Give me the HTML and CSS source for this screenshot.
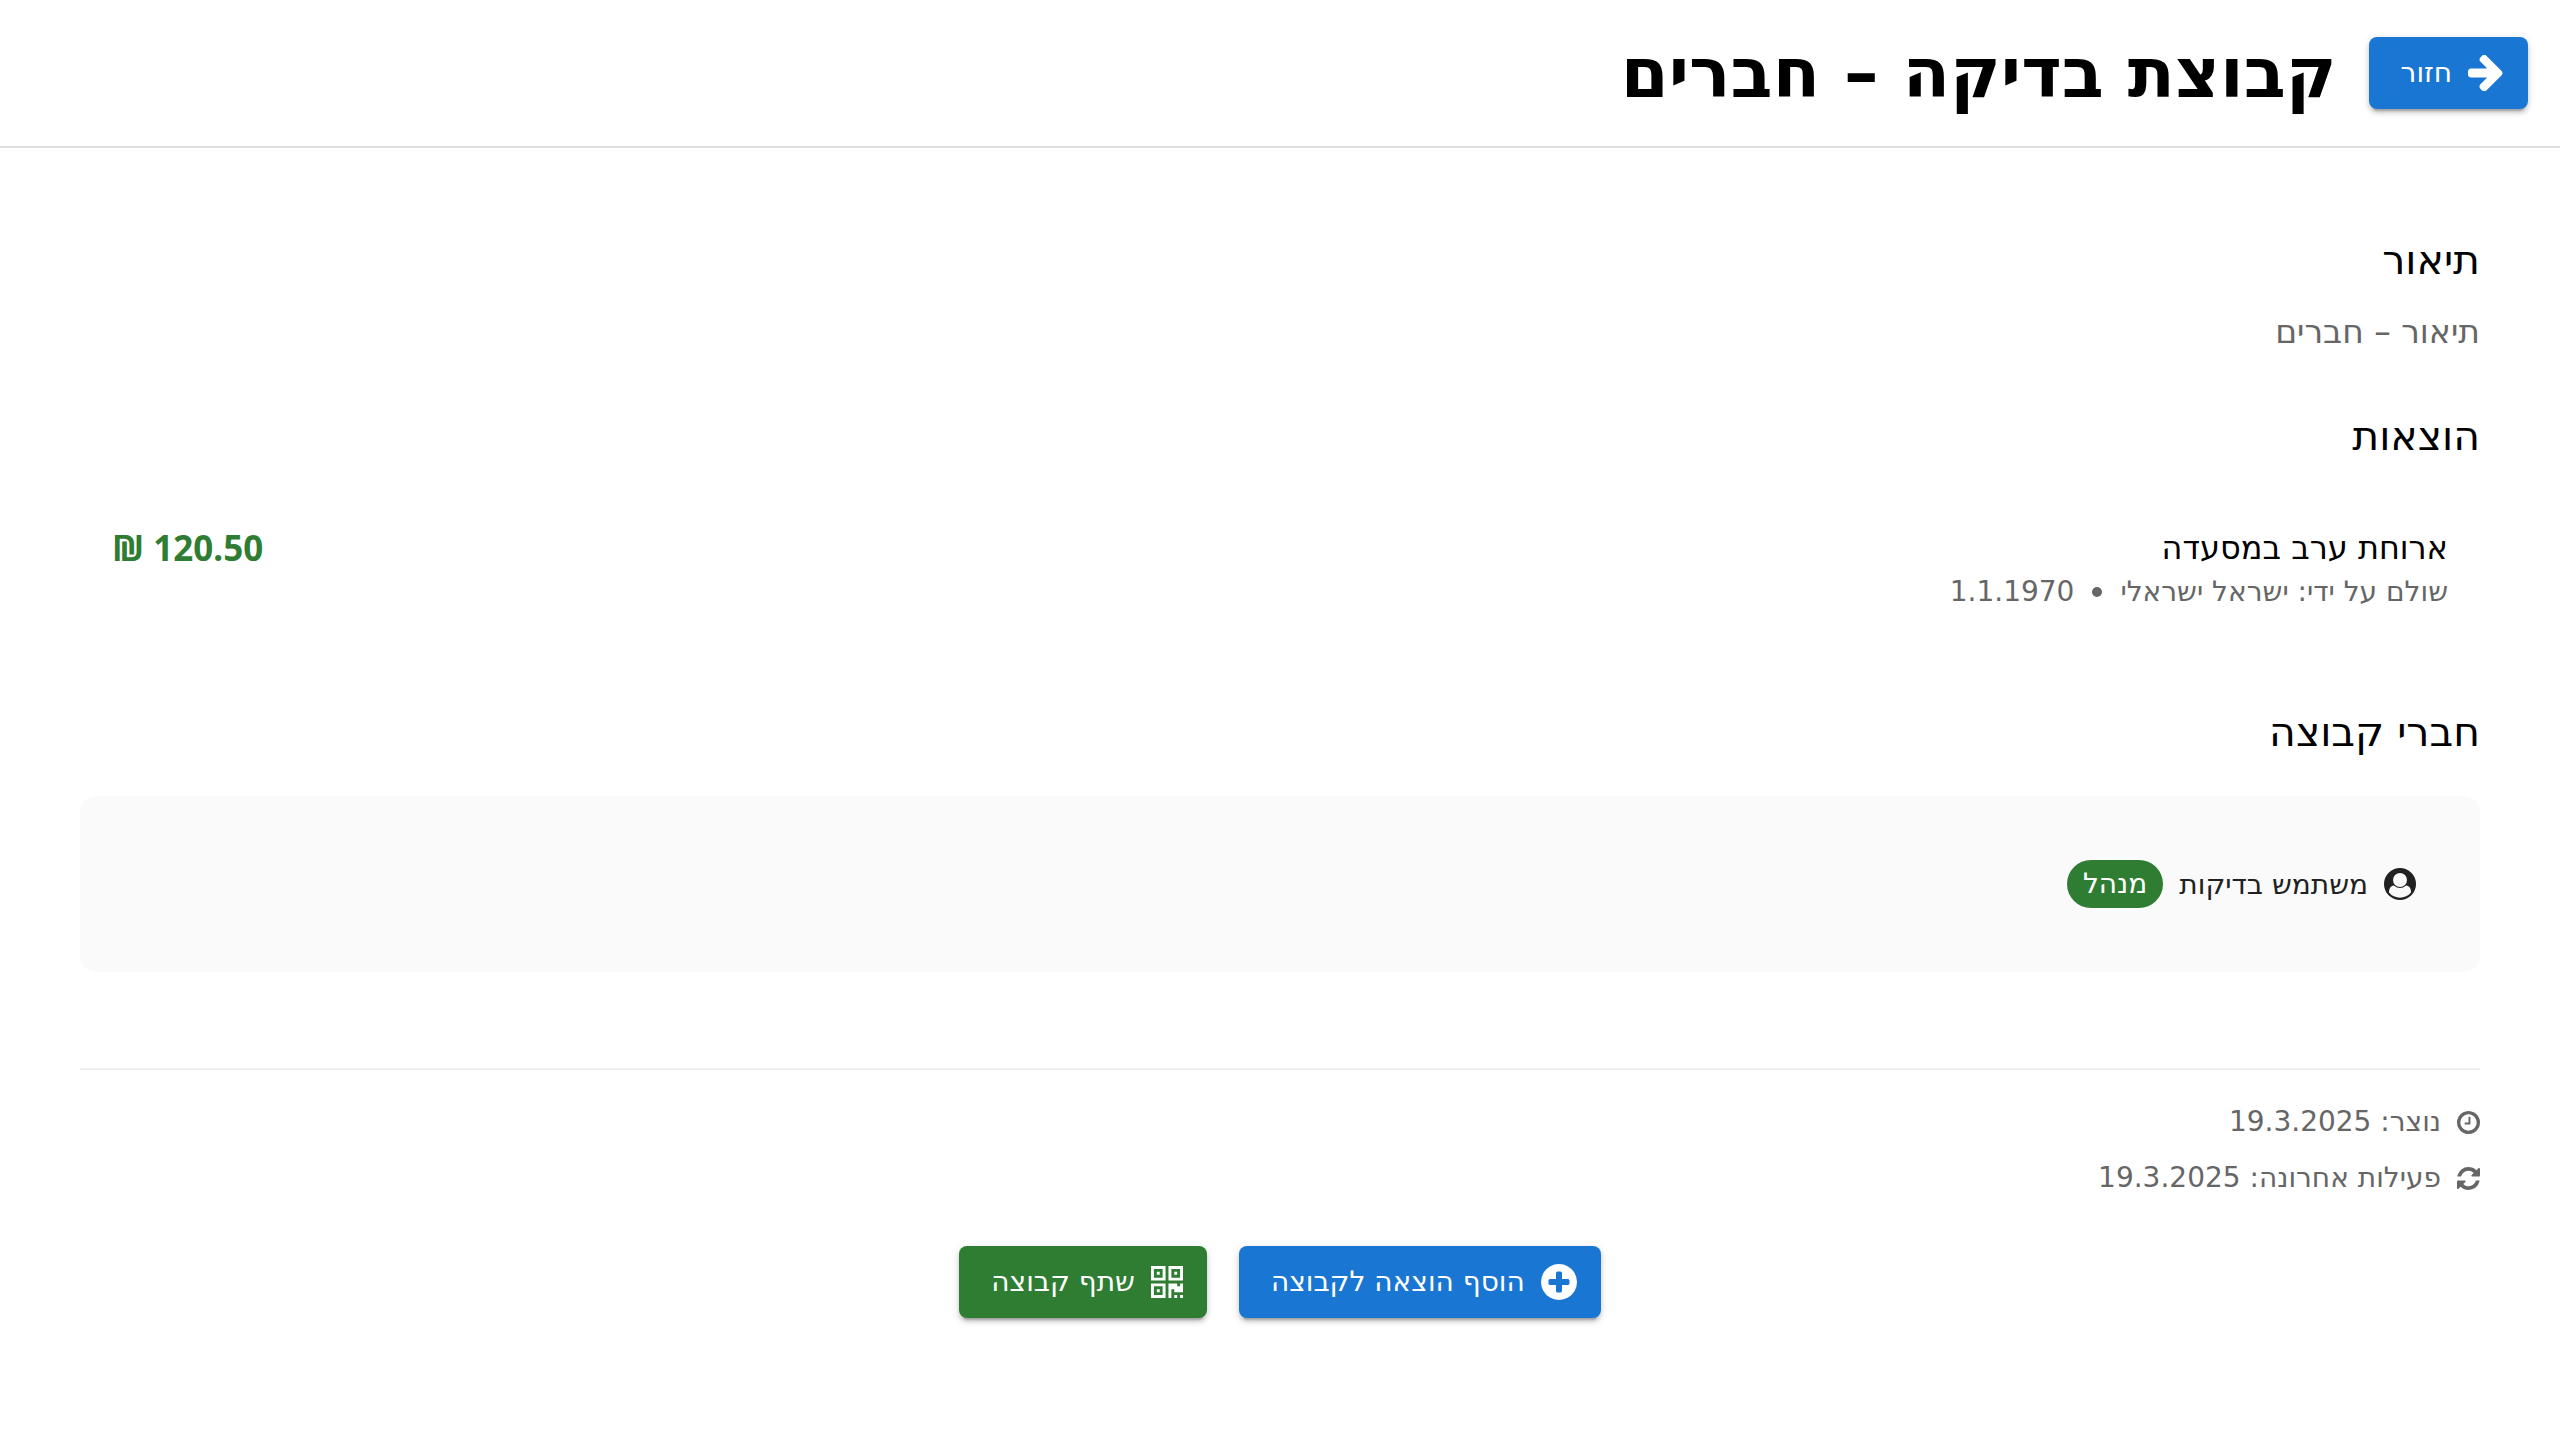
FILE: index.html
```
<!DOCTYPE html>
<html lang="he" dir="rtl">
<head>
<meta charset="utf-8">
<meta name="viewport" content="width=device-width, initial-scale=1">
<title>קבוצת בדיקה – חברים</title>
<link rel="stylesheet" href="styles.css">
</head>
<body>
<header class="topbar">
  <button class="btn btn-blue" type="button">
    <svg class="icon-lg" viewBox="128 192 1536 1536" aria-hidden="true"><path d="M1600 960q0 54-37 91l-651 651q-39 37-91 37-51 0-90-37l-75-75q-38-38-38-91t38-91l293-293h-704q-52 0-84.5-37.5t-32.5-90.5v-128q0-53 32.5-90.5t84.5-37.5h704l-293-294q-38-37-38-90t38-90l75-75q38-38 90-38 53 0 91 38l651 651q37 35 37 90z"/></svg>
    <span>חזור</span>
  </button>
  <h1 class="title">קבוצת בדיקה – חברים</h1>
</header>

<main class="content">
  <section class="section">
    <h2 class="heading">תיאור</h2>
    <p class="description">תיאור – חברים</p>
  </section>

  <section class="section">
    <h2 class="heading">הוצאות</h2>
    <ul class="expenses">
      <li class="expense">
        <div>
          <div class="expense-name">ארוחת ערב במסעדה</div>
          <div class="expense-meta">
            <span>שולם על ידי: ישראל ישראלי</span>
            <span class="dot"></span>
            <time>1.1.1970</time>
          </div>
        </div>
        <div class="amount" dir="ltr">₪ 120.50</div>
      </li>
    </ul>
  </section>

  <section class="section">
    <h2 class="heading">חברי קבוצה</h2>
    <ul class="members">
      <li class="member">
        <svg class="icon-md" viewBox="0 0 32 32" aria-hidden="true">
          <circle cx="16" cy="16" r="16"/>
          <path class="cutout" d="M5 24.400C5 20 7 17.600 10.500 17.600H21.500C25 17.600 27 20 27 24.400A14 14 0 0 1 5 24.400z"/>
          <circle cx="16" cy="12" r="8"/>
          <circle class="cutout" cx="16" cy="12" r="7"/>
        </svg>
        <span>משתמש בדיקות</span>
        <span class="badge">מנהל</span>
      </li>
    </ul>
  </section>

  <footer class="details">
    <div class="detail">
      <svg class="icon-sm" viewBox="128 128 1536 1536" aria-hidden="true"><path d="M1024 544v448q0 14-9 23t-23 9h-320q-14 0-23-9t-9-23v-64q0-14 9-23t23-9h224v-352q0-14 9-23t23-9h64q14 0 23 9t9 23zm416 352q0-148-73-273t-198-198-273-73-273 73-198 198-73 273 73 273 198 198 273 73 273-73 198-198 73-273zm224 0q0 209-103 385.500t-279.500 279.500-385.500 103-385.500-103-279.500-279.500-103-385.500 103-385.500 279.500-279.500 385.500-103 385.500 103 279.500 279.500 103 385.500z"/></svg>
      <span>נוצר: 19.3.2025</span>
    </div>
    <div class="detail">
      <svg class="icon-sm" viewBox="128 128 1536 1536" aria-hidden="true"><path d="M1639 1056q0 5-1 7-64 268-268 434.500t-478 166.500q-146 0-282.500-55t-243.500-157l-129 129q-19 19-45 19t-45-19-19-45v-448q0-26 19-45t45-19h448q26 0 45 19t19 45-19 45l-137 137q71 66 161 102t187 36q134 0 250-65t186-179q11-17 53-117 8-23 30-23h192q13 0 22.500 9.500t9.500 22.500zm25-800v448q0 26-19 45t-45 19h-448q-26 0-45-19t-19-45 19-45l138-138q-148-137-349-137-134 0-250 65t-186 179q-11 17-53 117-8 23-30 23h-199q-13 0-22.500-9.500t-9.500-22.500v-7q65-268 270-434.500t480-166.500q146 0 284 55.500t245 156.500l130-129q19-19 45-19t45 19 19 45z"/></svg>
      <span>פעילות אחרונה: 19.3.2025</span>
    </div>
  </footer>

  <div class="actions">
    <button class="btn btn-blue" type="button">
      <svg class="icon-lg" viewBox="128 128 1536 1536" aria-hidden="true"><path d="M1344 960v-128q0-26-19-45t-45-19h-256v-256q0-26-19-45t-45-19h-128q-26 0-45 19t-19 45v256h-256q-26 0-45 19t-19 45v128q0 26 19 45t45 19h256v256q0 26 19 45t45 19h128q26 0 45-19t19-45v-256h256q26 0 45-19t19-45zm320-64q0 209-103 385.500t-279.500 279.500-385.500 103-385.500-103-279.500-279.500-103-385.500 103-385.500 279.500-279.500 385.500-103 385.500 103 279.500 279.500 103 385.500z"/></svg>
      <span>הוסף הוצאה לקבוצה</span>
    </button>
    <button class="btn btn-green" type="button">
      <svg class="icon-md" viewBox="0 0 11 11" aria-hidden="true"><path fill-rule="evenodd" d="M0 0h5v5h-5zM1 1v3h3v-3zM2 2h1v1h-1zM6 0h5v5h-5zM7 1v3h3v-3zM8 2h1v1h-1zM0 6h5v5h-5zM1 7v3h3v-3zM2 8h1v1h-1zM6 6h3v1h1v-1h1v3h-3v-1h-1v3h-1zM8 10h1v1h-1zM10 10h1v1h-1z"/></svg>
      <span>שתף קבוצה</span>
    </button>
  </div>
</main>
</body>
</html>
```
FILE: styles.css
```
* {
  box-sizing: border-box;
}

body {
  margin: 0;
  background: #fff;
  color: #000;
  font-family: "DejaVu Sans", sans-serif;
  font-size: 28px;
}

h1, h2, p, ul {
  margin: 0;
  padding: 0;
  font-weight: 400;
}

ul {
  list-style: none;
}

svg {
  flex: none;
  fill: currentColor;
}

.icon-lg {
  width: 36px;
  height: 36px;
}

.icon-md {
  width: 32px;
  height: 32px;
}

.icon-sm {
  width: 23px;
  height: 23px;
}

.topbar {
  display: flex;
  align-items: center;
  gap: 32px;
  padding: 36px 32px;
  border-bottom: 2px solid #e0e0e0;
}

.title {
  font-size: 69px;
  font-weight: 700;
  line-height: 74px;
}

.btn {
  display: flex;
  align-items: center;
  gap: 16px;
  height: 72px;
  padding: 0 24px 0 32px;
  border: 0;
  border-radius: 8px;
  color: #fff;
  font: inherit;
  line-height: 40px;
  cursor: pointer;
  box-shadow: 0 6px 2px -4px rgba(0, 0, 0, 0.2), 0 4px 4px rgba(0, 0, 0, 0.14), 0 2px 10px rgba(0, 0, 0, 0.12);
}

.btn-blue {
  background: #1976d2;
}

.btn-green {
  background: #2e7d32;
}

.content {
  padding: 80px;
}

.section {
  margin-bottom: 48px;
}

.heading {
  margin-bottom: 16px;
  font-size: 41px;
  line-height: 64px;
}

.description {
  font-size: 33px;
  line-height: 48px;
  color: #666;
}

.expenses {
  padding: 40px 32px;
}

.expense {
  display: flex;
  justify-content: space-between;
  align-items: flex-start;
}

.expense-name {
  font-size: 32px;
  line-height: 48px;
}

.expense-meta {
  display: flex;
  align-items: center;
  gap: 18px;
  line-height: 40px;
  color: #666;
}

.dot {
  width: 10px;
  height: 10px;
  border-radius: 50%;
  background: currentColor;
}

.amount {
  font-family: "Noto Sans", "DejaVu Sans", sans-serif;
  font-size: 35px;
  font-weight: 700;
  line-height: 48px;
  color: #2e7d32;
}

.members {
  margin-top: 32px;
  padding: 64px;
  border-radius: 16px;
  background: #fafafa;
  color: #212121;
}

.member {
  display: flex;
  align-items: center;
  gap: 16px;
}

.cutout {
  fill: #fafafa;
}

.badge {
  padding: 0 16px;
  border-radius: 24px;
  background: #2e7d32;
  color: #fff;
  line-height: 48px;
}

.details {
  display: flex;
  flex-direction: column;
  gap: 16px;
  margin-top: 96px;
  padding-top: 32px;
  border-top: 2px solid #eee;
  color: #666;
}

.detail {
  display: flex;
  align-items: center;
  gap: 16px;
  line-height: 40px;
}

.actions {
  display: flex;
  justify-content: center;
  gap: 32px;
  margin-top: 48px;
}
```
